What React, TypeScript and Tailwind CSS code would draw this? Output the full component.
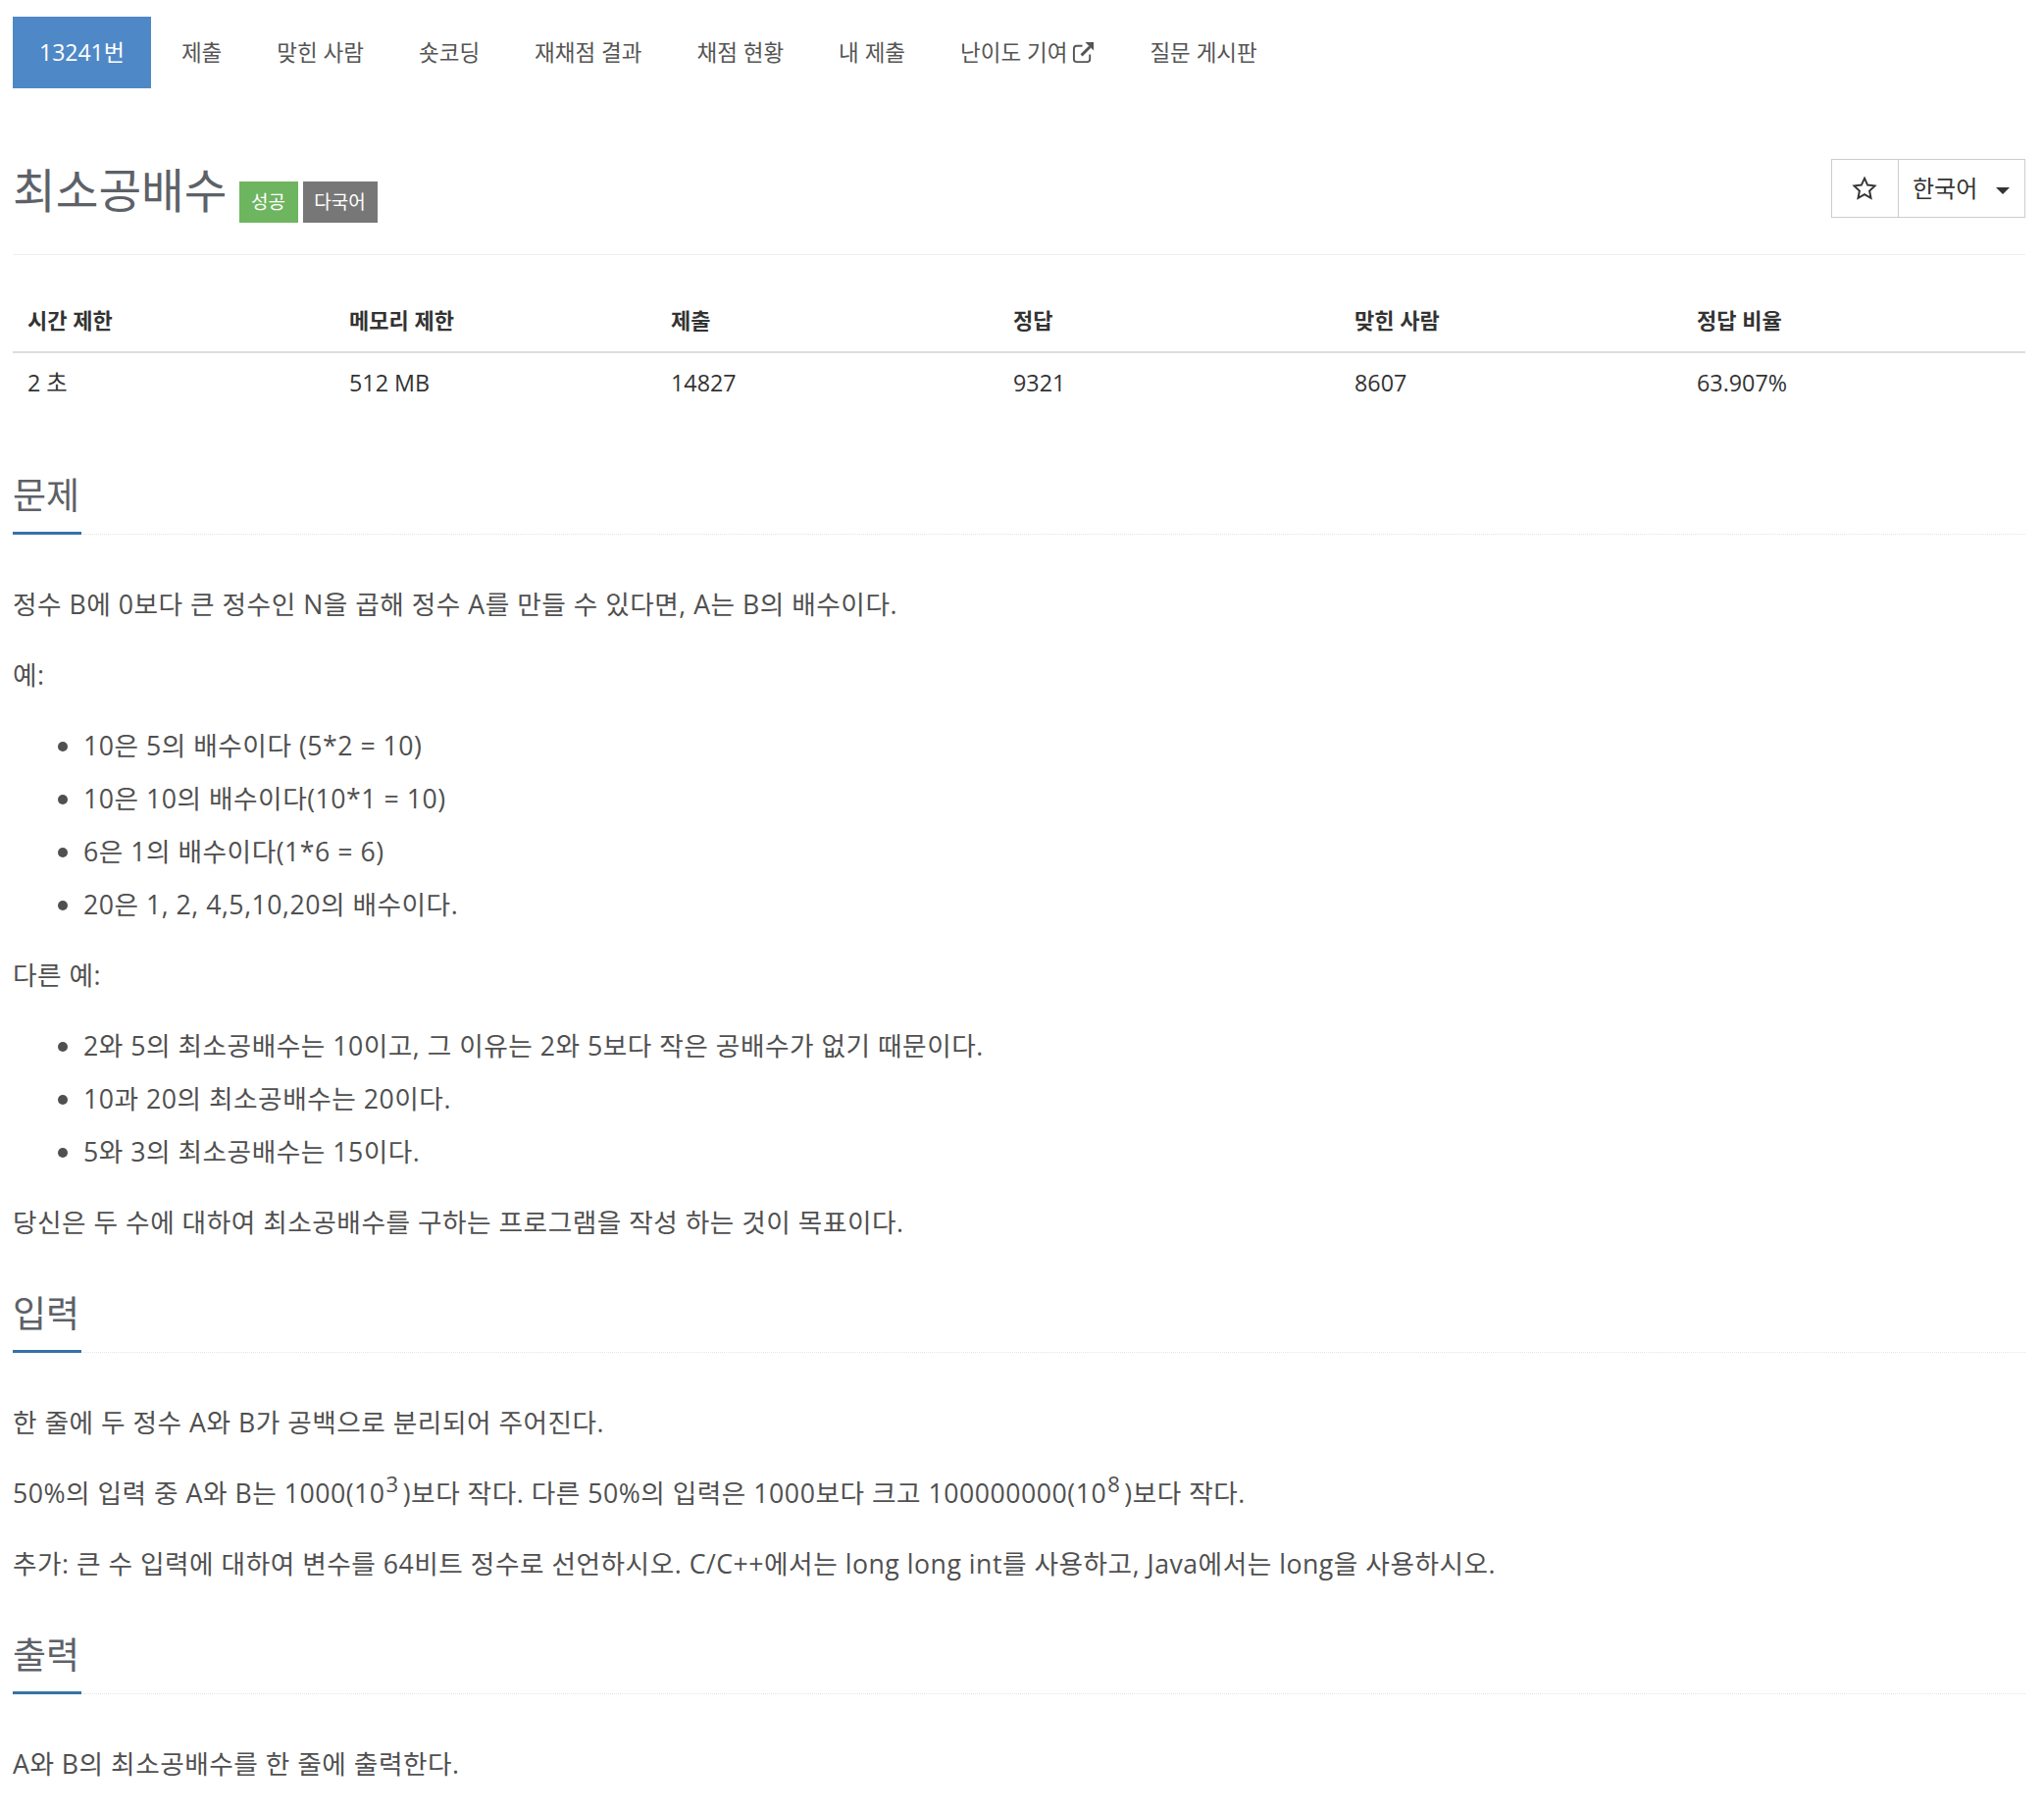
import React from "react";

const font = { fontFamily: '"Open Sans","Noto Sans CJK KR",sans-serif' };

function Tab({ children, active }: { children: React.ReactNode; active?: boolean }) {
  return (
    <a className={active ? "mr-[3px] flex h-[73px] items-center px-[27px] text-[23px] text-white bg-[#4f88c6]" : "flex h-[73px] items-center px-[28px] text-[22.5px] text-[#555]"}>
      {children}
    </a>
  );
}

function Heading({ children }: { children: React.ReactNode }) {
  return (
    <div className="mt-[46px] h-[60px] border-b border-dotted border-[#e4e4e4]">
      <h2 className="inline-block h-[60px] border-b-[3px] border-[#3572a8] pr-[2px] text-[37px] leading-[40px] text-[#5d6168]">{children}</h2>
    </div>
  );
}

const P = ({ children }: { children: React.ReactNode }) => <p className="mb-[18px] text-[26.7px] leading-[54px] tracking-[0.5px] text-[#505050]">{children}</p>;

function List({ items }: { items: string[] }) {
  return (
    <ul className="mb-[18px] list-disc pl-[72px] text-[26.7px] leading-[54px] tracking-[0.5px] text-[#505050]">
      {items.map((t) => (
        <li key={t}>{t}</li>
      ))}
    </ul>
  );
}

export default function App() {
  const heads = ["시간 제한", "메모리 제한", "제출", "정답", "맞힌 사람", "정답 비율"];
  const vals = ["2 초", "512 MB", "14827", "9321", "8607", "63.907%"];
  const widths = ["w-[328px]", "w-[328px]", "w-[349px]", "w-[348px]", "w-[349px]", "w-[350px]"];
  return (
    <div style={font} className="h-[1848px] overflow-hidden bg-white pl-[13px] pr-[19px] pt-[17px]">
      <nav className="flex">
        <Tab active>13241번</Tab>
        <Tab>제출</Tab>
        <Tab>맞힌 사람</Tab>
        <Tab>숏코딩</Tab>
        <Tab>재채점 결과</Tab>
        <Tab>채점 현황</Tab>
        <Tab>내 제출</Tab>
        <Tab>
          난이도 기여
          <svg className="ml-[5px]" width="23" height="23" viewBox="0 0 24 24" fill="none" stroke="#555" strokeWidth="2">
            <path d="M11 5H5a3 3 0 0 0-3 3v11a3 3 0 0 0 3 3h11a3 3 0 0 0 3-3v-5" />
            <path d="M10 15L19 6" strokeWidth="3" />
            <path d="M14 1h9v9z" fill="#555" stroke="none" />
          </svg>
        </Tab>
        <Tab>질문 게시판</Tab>
      </nav>

      <div className="mt-[72px] flex h-[98px] items-start justify-between border-b border-[#eeeeee]">
        <div className="flex items-start">
          <h1 className="text-[47.5px] leading-[64px] text-[#5d6168]">최소공배수</h1>
          <span className="ml-[12px] mt-[23px] flex h-[42px] w-[60px] items-center justify-center bg-[#6eb55f] text-[19px] text-white">성공</span>
          <span className="ml-[5px] mt-[23px] flex h-[42px] w-[76px] items-center justify-center bg-[#777777] text-[19px] text-white">다국어</span>
        </div>
        <div className="flex h-[60px] border border-[#cccccc] text-[#333]">
          <div className="flex w-[68px] items-center justify-center border-r border-[#cccccc]">
            <svg className="-ml-[1px]" width="26" height="26" viewBox="0 0 24 24" fill="none" stroke="#333" strokeWidth="1.8">
              <path d="M12 2.5l2.9 6.3 6.8.8-5 4.7 1.3 6.8-6-3.4-6 3.4 1.3-6.8-5-4.7 6.8-.8z" />
            </svg>
          </div>
          <div className="flex w-[128px] items-center pb-[1px] pl-[14px] text-[24px]">
            한국어
            <span className="ml-[19px] mt-[5px] h-0 w-0 border-x-[7px] border-t-[7px] border-x-transparent border-t-[#333]" />
          </div>
        </div>
      </div>

      <table className="mt-[22px] w-full table-fixed border-collapse text-left text-[#333]">
        <thead>
          <tr className="border-b-2 border-[#dddddd]">
            {heads.map((h, i) => (
              <th key={h} className={`${widths[i]} h-[77px] px-[15px] pb-[15px] align-bottom text-[22px] font-bold text-[#333]`}>{h}</th>
            ))}
          </tr>
        </thead>
        <tbody>
          <tr>
            {vals.map((v) => (
              <td key={v} className="h-[62px] px-[15px] text-[23.3px] text-[#333]">{v}</td>
            ))}
          </tr>
        </tbody>
      </table>

      <div className="mt-[64px]">
        <Heading>문제</Heading>
        <div className="mt-[44px]">
          <P>정수 B에 0보다 큰 정수인 N을 곱해 정수 A를 만들 수 있다면, A는 B의 배수이다.</P>
          <P>예:</P>
          <List items={["10은 5의 배수이다 (5*2 = 10)", "10은 10의 배수이다(10*1 = 10)", "6은 1의 배수이다(1*6 = 6)", "20은 1, 2, 4,5,10,20의 배수이다."]} />
          <P>다른 예:</P>
          <List items={["2와 5의 최소공배수는 10이고, 그 이유는 2와 5보다 작은 공배수가 없기 때문이다.", "10과 20의 최소공배수는 20이다.", "5와 3의 최소공배수는 15이다."]} />
          <P>당신은 두 수에 대하여 최소공배수를 구하는 프로그램을 작성 하는 것이 목표이다.</P>
        </div>
        <Heading>입력</Heading>
        <div className="mt-[44px]">
          <P>한 줄에 두 정수 A와 B가 공백으로 분리되어 주어진다.</P>
          <P>
            50%의 입력 중 A와 B는 1000(10<sup className="pr-[4px] pl-[1px] text-[22px]">3</sup>)보다 작다. 다른 50%의 입력은 1000보다 크고 100000000(10<sup className="pr-[4px] pl-[1px] text-[22px]">8</sup>)보다 작다.
          </P>
          <P>추가: 큰 수 입력에 대하여 변수를 64비트 정수로 선언하시오. C/C++에서는 long long int를 사용하고, Java에서는 long을 사용하시오.</P>
        </div>
        <Heading>출력</Heading>
        <div className="mt-[44px]">
          <P>A와 B의 최소공배수를 한 줄에 출력한다.</P>
        </div>
      </div>
    </div>
  );
}
